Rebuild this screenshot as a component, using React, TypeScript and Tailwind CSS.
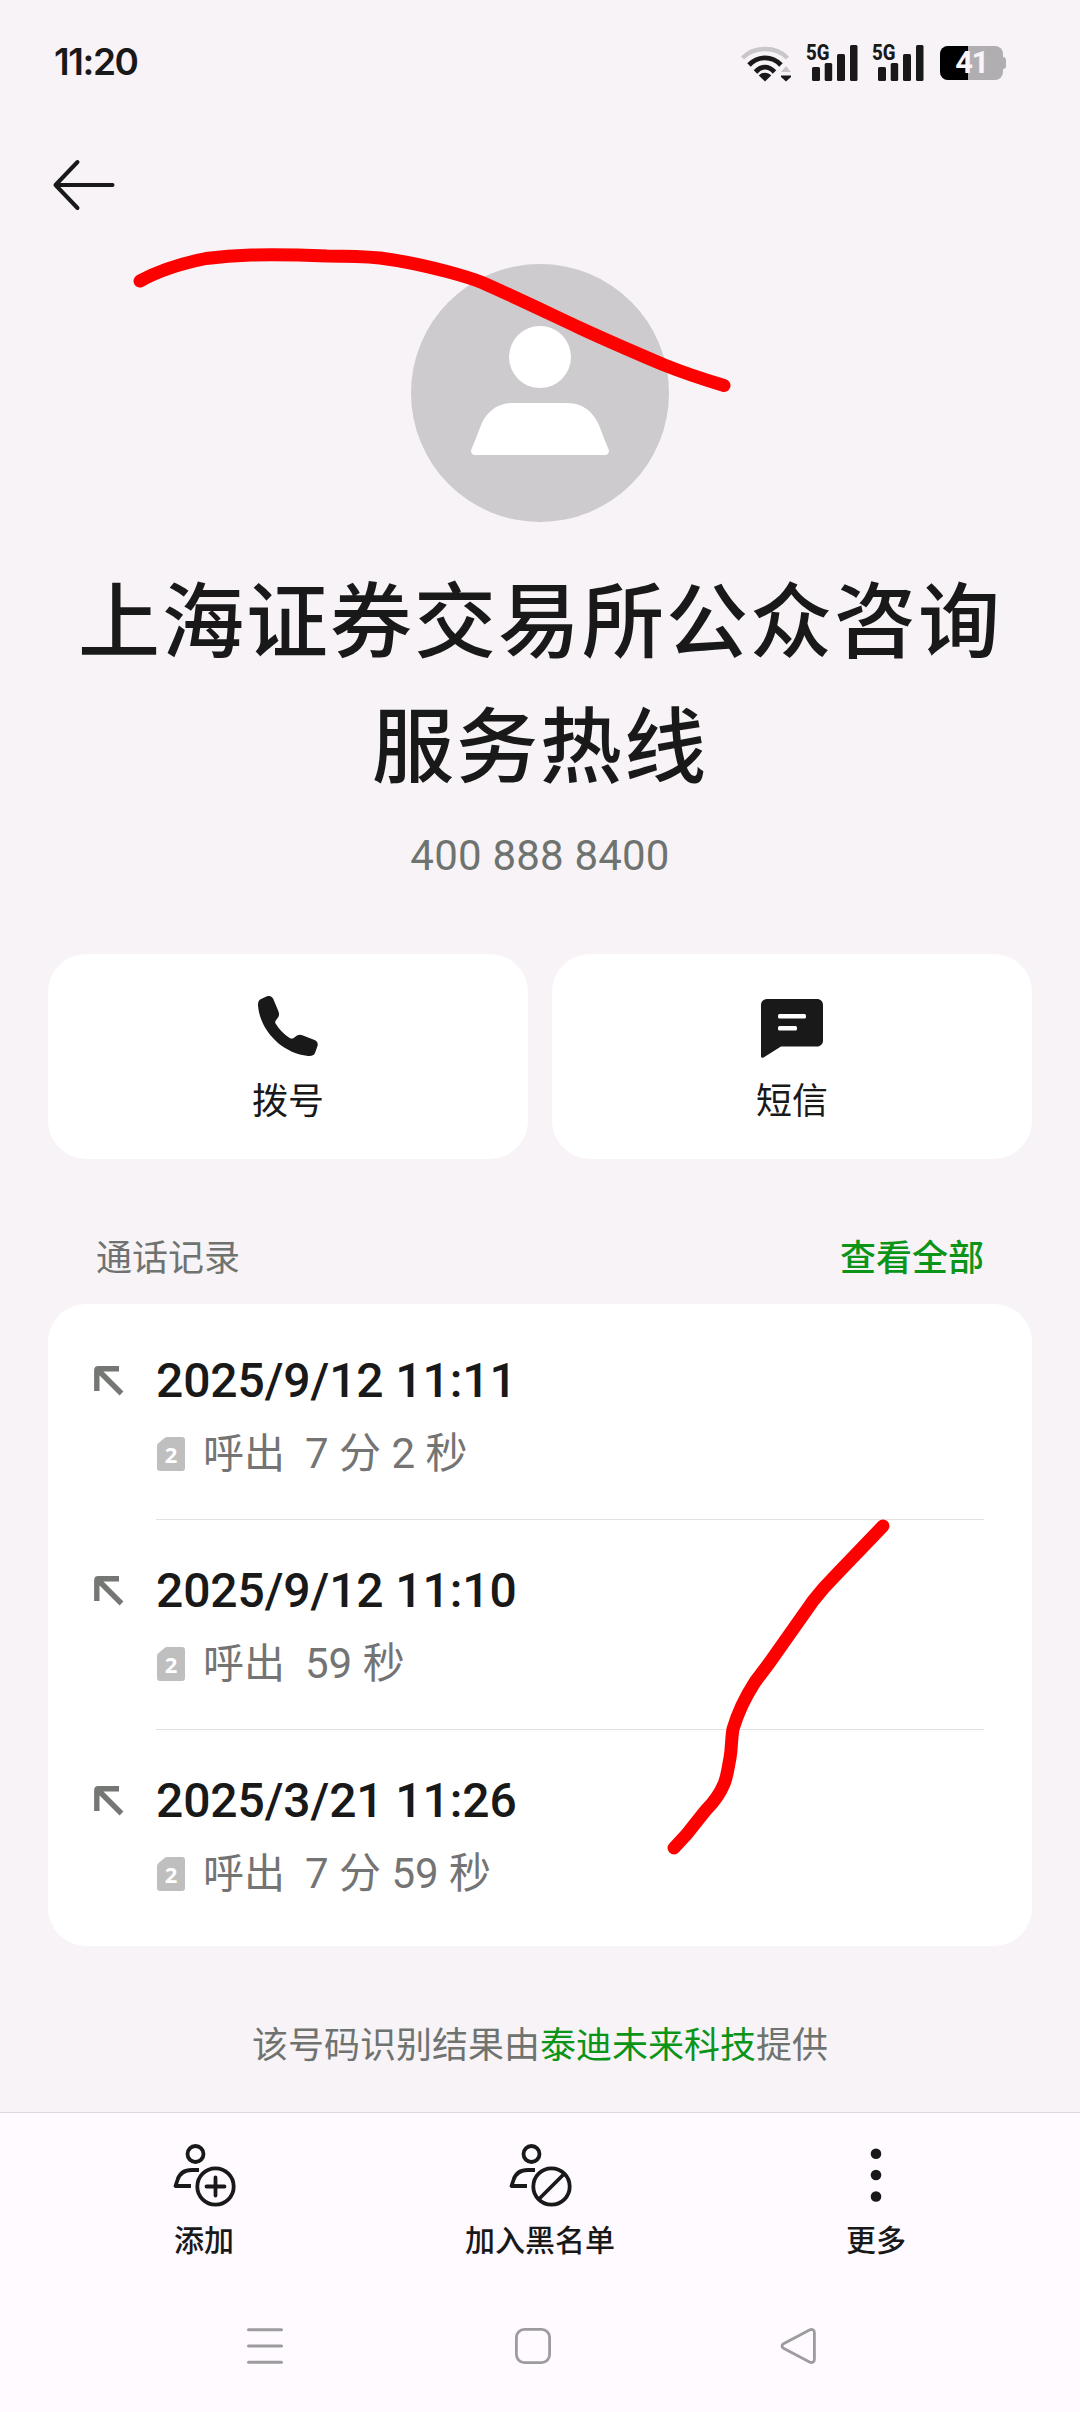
interface CallRecord {
  id: number;
  time: string;
  duration: string;
}

const CALLS: CallRecord[] = [
  { id: 1, time: '2025/9/12 11:11', duration: '7 分 2 秒' },
  { id: 2, time: '2025/9/12 11:10', duration: '59 秒' },
  { id: 3, time: '2025/3/21 11:26', duration: '7 分 59 秒' },
];

function WifiIcon() {
  return (
    <svg width="52" height="38" viewBox="0 0 52 38" fill="none">
      <path d="M2.500 14C14 2 36 2 47.500 14" stroke="#c9c7ca" strokeWidth="4.500" />
      <path d="M9 21C18 11.500 32 11.500 41 21" stroke="#191919" strokeWidth="4.800" />
      <path d="M15.500 28C21.500 21.500 28.500 21.500 34.500 28" stroke="#191919" strokeWidth="4.800" />
      <path d="M25 37.500L18.800 31.500C22 27.800 28 27.800 31.200 31.500Z" fill="#191919" />
      <path d="M41 28L46 22L51 28Z" fill="#c9c7ca" />
      <path d="M41 31.500H51V33L46 37.500L41 33Z" fill="#191919" />
    </svg>
  );
}

function SignalIcon() {
  return (
    <div className="relative h-[38px] w-[52px]">
      <svg width="52" height="38" viewBox="0 0 52 38" fill="#191919">
        <rect x="6" y="23" width="8" height="14" rx="1.500" />
        <rect x="18.700" y="19" width="7.500" height="18" rx="1.500" />
        <rect x="31" y="10" width="8" height="27" rx="1.500" />
        <rect x="44" y="1" width="7.500" height="36" rx="1.500" />
      </svg>
      <span className="absolute left-0 top-[-3px] origin-left scale-x-[0.83] font-[Roboto] text-[22.500px] leading-[22px] font-extrabold text-[#191919]">
        5G
      </span>
    </div>
  );
}

function BatteryIcon() {
  return (
    <div className="flex items-center">
      <div className="relative flex h-[34px] w-[63px] items-center justify-center rounded-[8px] bg-[#b0aeb1]">
        <div className="absolute inset-y-0 left-0 w-[28px] rounded-l-[8px] bg-black" />
        <span className="relative font-[Roboto] text-[31px] leading-[34px] font-bold tracking-[-1.500px] text-[#f8f4f9]">
          41
        </span>
      </div>
      <div className="h-[12px] w-[3px] rounded-r-[3px] bg-[#b0aeb1]" />
    </div>
  );
}

function StatusBar() {
  return (
    <div className="flex h-[123px] shrink-0 items-center justify-between pr-[74px] pl-[54px]">
      <span className="font-[Inter] text-[37px] leading-[40px] font-semibold tracking-[-1.400px] text-[#191919]">
        11:20
      </span>
      <div className="flex items-center pt-[2px]">
        <WifiIcon />
        <div className="ml-[14px] flex gap-[14px]">
          <SignalIcon />
          <SignalIcon />
        </div>
        <div className="ml-[16px]">
          <BatteryIcon />
        </div>
      </div>
    </div>
  );
}

function Avatar() {
  return (
    <div className="flex size-[258px] items-center justify-center rounded-full bg-[#cdcbce]">
      <svg width="258" height="258" viewBox="0 0 258 258" fill="#ffffff">
        <circle cx="129" cy="93" r="31" />
        <path d="M102 139H156C172 139 182 148 187.500 160C191 169 194 177 197.700 185.500C198.500 188.500 197 191 194 191H64C61 191 59.500 188.500 60.300 185.500C64 177 67 169 70.500 160C76 148 86 139 102 139Z" />
      </svg>
    </div>
  );
}

function PhoneIcon() {
  return (
    <svg width="64" height="64" viewBox="0 0 64 64" fill="#191919">
      <path d="M4.500 5.200L11 2.300C14 1.300 16.300 2.500 17.500 5.500L22.500 17.500C23.300 19.800 23.300 21.800 22 23.500L19.800 26.500C19 27.700 19 28.600 19.600 29.600C23 35.500 28 40.500 33.600 44C35.300 44.900 36.600 44.700 38 43.700L41 41.600C42.800 40.500 44.800 40.700 47 41.500L58.500 46C61.200 47.200 62.200 49.300 61.500 52L59 59C57.800 61.600 55.500 62.200 52 61.900C26 59.500 3.500 36 2 11C2 8.300 2.600 6.300 4.500 5.200Z" />
    </svg>
  );
}

function MessageIcon() {
  return (
    <svg width="64" height="64" viewBox="0 0 64 64">
      <path
        d="M7 5H57C60.500 5 63 7.500 63 11V46.500C63 50 60.500 52.500 57 52.500H21L3.500 63.500C2 64.300 1 63.500 1 62V11C1 7.500 3.500 5 7 5Z"
        fill="#191919"
      />
      <rect x="18" y="20" width="28" height="4.500" rx="1.500" fill="#ffffff" />
      <rect x="18" y="32" width="19" height="4.500" rx="1.500" fill="#ffffff" />
    </svg>
  );
}

function SimBadge() {
  return (
    <div className="relative h-[36px] w-[28px]">
      <svg width="28" height="36" viewBox="0 0 28 36" fill="#bfbfbf">
        <path d="M10 1H25C27 1 28 2 28 4V32C28 34 27 35 25 35H3C1 35 0 34 0 32V10C0 9 0.300 8.300 1 7.500L7.500 2C8.300 1.300 9 1 10 1Z" />
      </svg>
      <span className="absolute inset-0 text-center font-['Open_Sans'] text-[22px] leading-[37px] font-bold text-white">
        2
      </span>
    </div>
  );
}

function CallRow({ call, last }: { call: CallRecord; last: boolean }) {
  return (
    <div className="flex h-[210px] pl-[46px]">
      <svg className="mt-[56px]" width="30" height="30" viewBox="0 0 30 30" fill="none" stroke="#747773">
        <path d="M2.800 25V4.500Q2.800 2.800 4.500 2.800H25M4 4L27.500 27.500" strokeWidth="5.400" />
      </svg>
      <div
        className={
          last
            ? 'mr-[48px] ml-[32px] flex-1'
            : 'mr-[48px] ml-[32px] flex-1 border-b border-[#e2e2e2]'
        }
      >
        <div className="mt-[41px] text-[48px] leading-[60px] font-medium tracking-[-0.100px] text-[#191919]">
          {call.time}
        </div>
        <div className="mt-[13px] flex h-[60px] items-center pl-[1px] text-[42px] leading-[60px] text-[#747474]">
          <SimBadge />
          <span className="ml-[18px] text-[41px]">呼出</span>
          <span className="ml-[20px]">{call.duration}</span>
        </div>
      </div>
    </div>
  );
}

function PersonOutline() {
  return (
    <>
      <circle cx="23.500" cy="11" r="8" />
      <path d="M27 27H20C10 27 7 32 5.500 37L3.500 43H19" strokeLinejoin="round" />
      <circle cx="43.500" cy="43.500" r="18.200" />
    </>
  );
}

function BottomBar() {
  return (
    <div className="mt-auto h-[300px] shrink-0 border-t border-[#dcdadd] bg-[#fefaff]">
      <div className="grid grid-cols-3 px-[36px] pt-[30px] text-center text-[30px] leading-[40px] font-medium text-[#191919]">
        <div className="flex flex-col items-center">
          <svg width="64" height="64" viewBox="0 0 64 64" fill="none" stroke="#191919" strokeWidth="3.800">
            <PersonOutline />
            <path d="M43.500 34.500V52.500M34.500 43.500H52.500" strokeLinecap="round" />
          </svg>
          <span className="mt-[14px]">添加</span>
        </div>
        <div className="flex flex-col items-center">
          <svg width="64" height="64" viewBox="0 0 64 64" fill="none" stroke="#191919" strokeWidth="3.800">
            <PersonOutline />
            <path d="M31 56L56 31" />
          </svg>
          <span className="mt-[14px]">加入黑名单</span>
        </div>
        <div className="flex flex-col items-center">
          <svg width="64" height="64" viewBox="0 0 64 64" fill="#191919">
            <circle cx="32" cy="10.700" r="5.300" />
            <circle cx="32" cy="32" r="5.300" />
            <circle cx="32" cy="53.500" r="5.300" />
          </svg>
          <span className="mt-[14px]">更多</span>
        </div>
      </div>
      <div className="mt-[66px] flex pl-[246px]">
        <svg width="38" height="38" viewBox="0 0 38 38" stroke="#9d9b9e" strokeWidth="3" strokeLinecap="round">
          <path d="M2.500 2.700H35.500M2.500 19H35.500M2.500 35.300H35.500" />
        </svg>
        <svg className="ml-[230px]" width="38" height="38" viewBox="0 0 38 38" fill="none" stroke="#9d9b9e" strokeWidth="2.800">
          <rect x="2.400" y="2.400" width="33.200" height="33.200" rx="8" />
        </svg>
        <svg className="ml-[228px]" width="38" height="38" viewBox="0 0 38 38" fill="none" stroke="#9d9b9e" strokeWidth="2.800">
          <path d="M3.500 16.700L29.500 3C32 1.800 34.400 2.800 34.400 5.500V32.500C34.400 35.200 32 36.200 29.500 35L3.500 21.300C1.500 20.200 1.500 17.800 3.500 16.700Z" />
        </svg>
      </div>
    </div>
  );
}

// Red pen marks drawn over the screen
function PenMarks() {
  return (
    <svg
      className="pointer-events-none absolute inset-0"
      width="1080"
      height="2412"
      viewBox="0 0 1080 2412"
      fill="none"
      stroke="#ff0000"
      strokeWidth="13"
      strokeLinecap="round"
      strokeLinejoin="round"
    >
      <path d="M140 281C158 271 184 263 206 258.500C222 256.500 236 255.500 251 255C276 254.500 302 255 327 256C346 256 364 256.500 380 258C404 261 426 266 447 271.500C460 275 471 278 482 282.500C515 297 548 313 580 328C608 341 636 353 663 364.500C683 372.500 704 379.500 724 385.500" />
      <path d="M883 1526L835 1576C827 1584 820 1592 813 1601C799 1621 784 1642 770 1662L755 1682C746 1696 738 1712 733 1729C731 1740 732 1746 730 1758C728 1768 727 1777 724 1784C719 1796 713 1803 706 1810L698 1820C690 1831 683 1839 674 1848" />
    </svg>
  );
}

export default function App() {
  return (
    <div className="relative flex h-[2412px] w-[1080px] flex-col overflow-hidden bg-[#f7f3f7] font-[Roboto,'Noto_Sans_CJK_SC',sans-serif]">
      <StatusBar />

      <div className="flex h-[125px] shrink-0 items-center pb-[2px] pl-[52px]">
        <svg width="64" height="52" viewBox="0 0 64 52" fill="none" stroke="#191919" strokeWidth="4" strokeLinecap="round" strokeLinejoin="round">
          <path d="M25.500 3L3.500 26L25.500 49M3.500 26H60.500" />
        </svg>
      </div>

      <div className="flex flex-col items-center pt-[16px]">
        <Avatar />
        <h1 className="mt-[39px] text-center text-[82px] leading-[124.500px] font-medium tracking-[2px] text-[#191919]">
          上海证券交易所公众咨询
          <br />
          服务热线
        </h1>
        <div className="mt-[21px] text-[42px] leading-[50px] tracking-[0.200px] text-[#6f736f]">400 888 8400</div>
      </div>

      <div className="mt-[73px] grid grid-cols-2 gap-[24px] px-[48px] text-[36px] leading-[50px] text-[#191919]">
        <div className="flex h-[205px] flex-col items-center rounded-[38px] bg-white pt-[40px]">
          <PhoneIcon />
          <span className="mt-[19px]">拨号</span>
        </div>
        <div className="flex h-[205px] flex-col items-center rounded-[38px] bg-white pt-[40px]">
          <MessageIcon />
          <span className="mt-[19px]">短信</span>
        </div>
      </div>

      <div className="mt-[51px] flex h-[94px] shrink-0 items-center justify-between px-[96px] pt-[4px] text-[36px] leading-[50px]">
        <span className="text-[#6f736f]">通话记录</span>
        <span className="font-medium text-[#0a9418]">查看全部</span>
      </div>

      <div className="mx-[48px] h-[642px] shrink-0 rounded-[38px] bg-white pt-[6px]">
        {CALLS.map((call, index) => (
          <CallRow key={call.id} call={call} last={index === CALLS.length - 1} />
        ))}
      </div>

      <div className="mt-[75px] text-center text-[36px] leading-[50px] text-[#6f736f]">
        该号码识别结果由<span className="text-[#0a9418]">泰迪未来科技</span>提供
      </div>

      <BottomBar />
      <PenMarks />
    </div>
  );
}
